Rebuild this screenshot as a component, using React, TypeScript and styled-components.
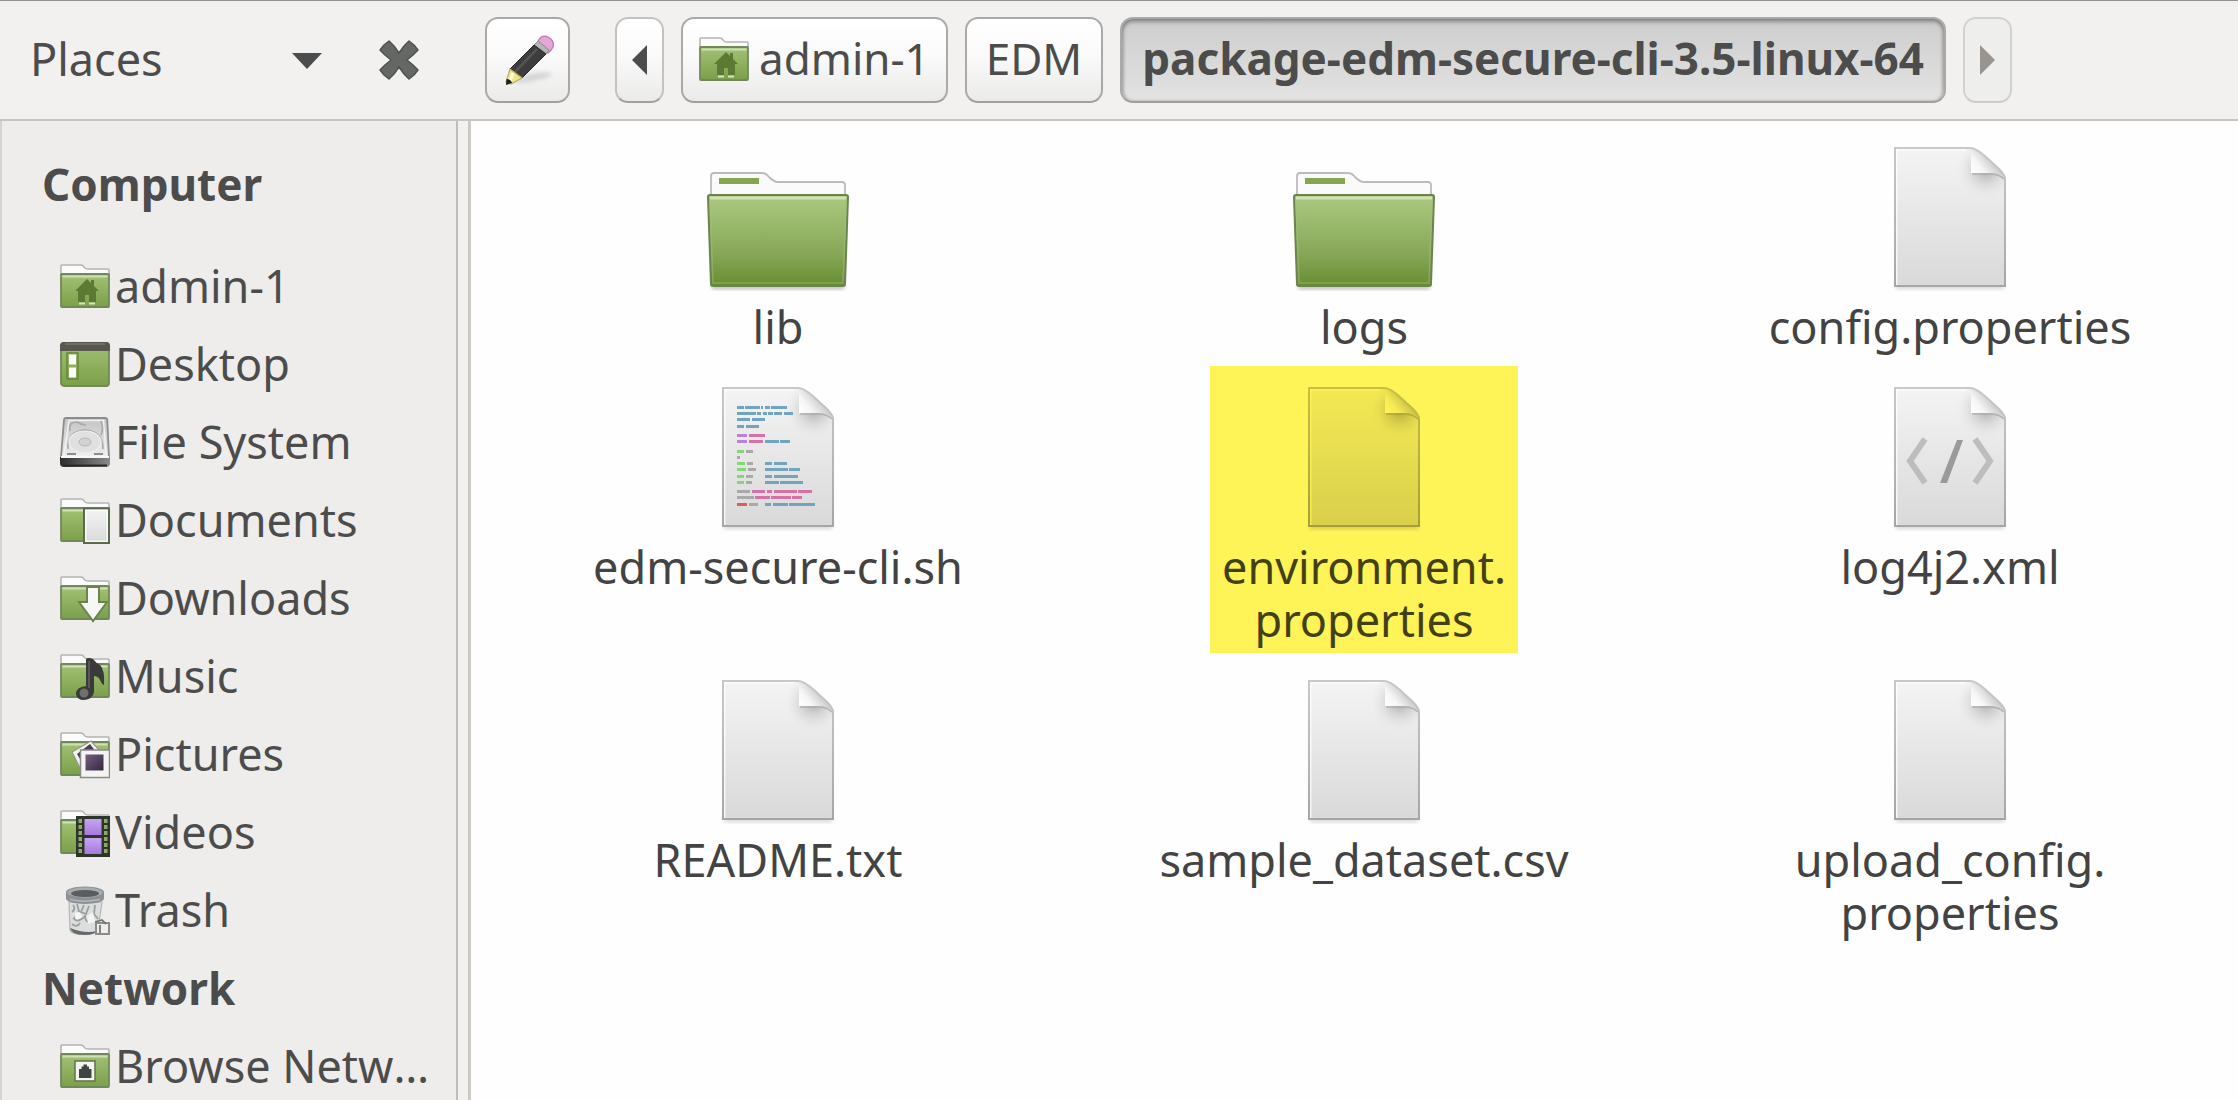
import React from 'react';
import styled, { createGlobalStyle } from 'styled-components';

const GlobalStyle = createGlobalStyle`
  *, *::before, *::after { box-sizing: border-box; }
  body { margin: 0; background: #f2f1f0; }
  body, button, select {
    font-family: 'Noto Sans', 'Open Sans', sans-serif;
    font-size: 44px;
    line-height: 53px;
    color: #4c4c4c;
  }
`;

/* ---------- layout ---------- */

const Window = styled.div`
  display: grid;
  grid-template-rows: auto minmax(0, 1fr);
  height: 100vh;
  overflow: hidden;
`;

const Header = styled.header`
  display: flex;
  align-items: center;
  height: 121px;
  border-top: 1px solid #959492;
  border-bottom: 2px solid #c6c4c1;
  background: #f2f1f0;
`;

const PaneHeader = styled.div`
  display: flex;
  align-items: center;
  flex: 0 0 468px;
  padding-left: 30px;
`;

const PanePicker = styled.label`
  display: grid;
  grid-template-columns: 1fr auto;
  align-items: center;
  width: 293px;
`;

const PaneSelect = styled.select`
  grid-area: 1 / 1 / 2 / 3;
  appearance: none;
  margin: 0;
  padding: 0 0 4px;
  border: 0;
  background: transparent;
  outline: none;
  font-size: 45px;
`;

const PaneArrow = styled.svg`
  grid-area: 1 / 2;
  pointer-events: none;
`;

const CloseButton = styled.button`
  display: flex;
  margin: 0 0 0 56px;
  padding: 0;
  border: 0;
  background: none;
`;

const Toolbar = styled.div`
  display: flex;
  gap: 45px;
  padding-left: 17px;
`;

const PathBar = styled.nav`
  display: flex;
  gap: 17px;
`;

const ToolButton = styled.button<{ $kind?: 'normal' | 'soft' | 'disabled' | 'active'; $pad?: number }>`
  display: flex;
  align-items: center;
  justify-content: center;
  gap: 10px;
  height: 86px;
  margin: 0;
  padding: 0 ${({ $pad = 16 }) => $pad}px 3px;
  white-space: nowrap;
  border-radius: 13px;
  border: 2px solid ${({ $kind }) =>
    $kind === 'disabled' ? '#d2d1cf' : $kind === 'soft' ? '#c3c2c0' : '#aaa9a8'};
  border-bottom-color: ${({ $kind }) => ($kind === 'disabled' ? '#cccbc9' : '#a09f9e')};
  background: ${({ $kind }) =>
    $kind === 'active'
      ? 'linear-gradient(#cdcdcd, #e3e3e3)'
      : $kind === 'disabled'
        ? '#eeeeed'
        : 'linear-gradient(#ffffff, #fafafa 45%, #ebeae9)'};
  box-shadow: ${({ $kind }) =>
    $kind === 'active'
      ? 'inset 0 3px 4px rgba(0,0,0,.32), inset 2px 0 3px rgba(0,0,0,.12), inset -2px 0 3px rgba(0,0,0,.12)'
      : 'none'};
  font-weight: ${({ $kind }) => ($kind === 'active' ? 700 : 400)};
`;

const SquareButton = styled(ToolButton)`
  width: 85px;
  padding: 0;
`;

const ArrowButton = styled(ToolButton)`
  width: 49px;
  padding: 0;
`;

const Body = styled.div`
  display: grid;
  grid-template-columns: 458px minmax(0, 1fr);
  gap: 10px;
  min-height: 0;
`;

const Sidebar = styled.aside`
  padding-top: 24px;
  border-left: 2px solid #d5d3d0;
  border-right: 2px solid #bfbdba;
  background: #eeedeb;
  overflow: auto;
  scrollbar-width: none;
`;

const SectionTitle = styled.h2<{ $spaced?: boolean }>`
  margin: 0 0 ${({ $spaced }) => ($spaced ? 24 : 0)}px;
  padding-left: 40px;
  font-size: 44px;
  line-height: 78px;
  font-weight: 700;
`;

const PlaceList = styled.ul`
  margin: 0;
  padding: 0;
  list-style: none;
`;

const PlaceLink = styled.a`
  display: flex;
  align-items: center;
  gap: 5px;
  height: 78px;
  padding: 0 16px 0 58px;
  color: inherit;
  text-decoration: none;

  svg { flex: none; }
`;

const PlaceName = styled.span`
  overflow: hidden;
  text-overflow: ellipsis;
  white-space: nowrap;
  font-size: 45px;
  line-height: 78px;
`;

const FileView = styled.main`
  border-left: 3px solid #cbc9c6;
  background: #fefefe;
  overflow: hidden;
`;

const FileGrid = styled.ul`
  display: grid;
  grid-template-columns: repeat(3, minmax(0, 1fr));
  column-gap: 46px;
  row-gap: 34px;
  margin: 0;
  padding: 26px 18px 0 37px;
  list-style: none;
`;

const FileItem = styled.li`
  position: relative;
  display: flex;
  flex-direction: column;
  align-items: center;
  gap: 13px;
`;

const IconBox = styled.div`
  display: flex;
  align-items: flex-end;
  height: 140px;

  svg { overflow: visible; }
`;

const FileName = styled.span`
  max-width: 440px;
  text-align: center;
  font-size: 45px;
  color: #434343;
`;

const Marker = styled.span`
  position: absolute;
  top: -21px;
  bottom: -7px;
  left: 50%;
  width: 308px;
  transform: translateX(-50%);
  background: #fff457;
  mix-blend-mode: multiply;
`;

/* ---------- small icons ---------- */

const SharedDefs = () => (
  <svg width="0" height="0" style={{ position: 'absolute' }} aria-hidden="true">
    <defs>
      <linearGradient id="green" x1="0" y1="0" x2="0" y2="1">
        <stop offset="0" stopColor="#a3c275" />
        <stop offset="1" stopColor="#7b9f49" />
      </linearGradient>
      <linearGradient id="bigGreen" x1="0" y1="0" x2="0" y2="1">
        <stop offset="0" stopColor="#abca80" />
        <stop offset=".65" stopColor="#87a757" />
        <stop offset="1" stopColor="#678d33" />
      </linearGradient>
      <linearGradient id="sheet" x1="0" y1="0" x2="0" y2="1">
        <stop offset="0" stopColor="#f4f4f4" />
        <stop offset="1" stopColor="#d9d9d9" />
      </linearGradient>
      <linearGradient id="edge" x1="0" y1="0" x2="0" y2="1">
        <stop offset="0" stopColor="#c8c8c8" />
        <stop offset="1" stopColor="#a6a6a6" />
      </linearGradient>
      <linearGradient id="fold" x1="78" y1="26" x2="98" y2="10" gradientUnits="userSpaceOnUse">
        <stop offset="0" stopColor="#ffffff" />
        <stop offset=".4" stopColor="#f6f6f6" />
        <stop offset="1" stopColor="#c4c4c4" />
      </linearGradient>
      <radialGradient id="foldShade" cx="92" cy="22" r="30" gradientUnits="userSpaceOnUse">
        <stop offset="0" stopColor="#8f8f8f" stopOpacity=".75" />
        <stop offset=".5" stopColor="#b5b5b5" stopOpacity=".35" />
        <stop offset="1" stopColor="#e5e5e5" stopOpacity="0" />
      </radialGradient>
      <linearGradient id="disk" x1="0" y1="0" x2="0" y2="1">
        <stop offset="0" stopColor="#c4c4c4" />
        <stop offset="1" stopColor="#ececec" />
      </linearGradient>
      <linearGradient id="diskBase" x1="0" y1="0" x2="1" y2="0">
        <stop offset="0" stopColor="#2c2c2c" />
        <stop offset="1" stopColor="#8a8a8a" />
      </linearGradient>
      <linearGradient id="purple" x1="0" y1="0" x2="0" y2="1">
        <stop offset="0" stopColor="#c6a4f2" />
        <stop offset="1" stopColor="#a878dc" />
      </linearGradient>
      <linearGradient id="photo" x1="0" y1="0" x2="1" y2="1">
        <stop offset="0" stopColor="#75607f" />
        <stop offset="1" stopColor="#35263f" />
      </linearGradient>
      <filter id="soft" x="-30%" y="-30%" width="160%" height="160%">
        <feGaussianBlur stdDeviation="2" />
      </filter>
    </defs>
  </svg>
);

const SmallIcon = ({ children }: { children: React.ReactNode }) => (
  <svg width="50" height="50" viewBox="0 0 50 50" aria-hidden="true">
    {children}
  </svg>
);

const FolderBase = () => (
  <>
    <path d="M1 14V5Q1 4 2 4H21Q23 4 24 6T28 8H48Q49 8 49 9V14Z" fill="#fbfbfb" stroke="#b4b4b2" strokeWidth="1.6" />
    <rect x="1" y="13" width="48" height="33" rx="1" fill="url(#green)" stroke="#71895a" strokeWidth="1.8" />
    <path d="M2.500 15.500H47.500" stroke="#cfe0b4" strokeWidth="2" />
  </>
);

const HomeIcon = () => (
  <SmallIcon>
    <FolderBase />
    <path d="M27 18L31 22V19H34V25L39 30H36V41H29V34H25V41H18V30H15Z" fill="#5d7a33" />
    <path d="M19 42.500H25M29 42.500H35" stroke="#d5e4bf" strokeWidth="2" />
  </SmallIcon>
);

const DesktopIcon = () => (
  <SmallIcon>
    <rect x="1" y="4" width="48" height="43" rx="3" fill="url(#green)" stroke="#71895a" strokeWidth="1.8" />
    <path d="M0 12V7Q0 3 4 3H46Q50 3 50 7V12Z" fill="#57574f" />
    <path d="M5 5H45" stroke="#77776e" strokeWidth="1.500" />
    <rect x="7" y="14" width="11" height="26" fill="none" stroke="#66873c" strokeWidth="1.500" />
    <rect x="9" y="15.500" width="7" height="10" fill="#fafafa" />
    <rect x="9" y="28.500" width="7" height="10" fill="#fafafa" />
  </SmallIcon>
);

const DiskIcon = () => (
  <SmallIcon>
    <path d="M6 1H45Q47 1 47.300 3L49 40H1L4 3Q4 1 6 1Z" fill="url(#disk)" stroke="#8c8c8c" strokeWidth="1.8" />
    <path d="M9 3.500H43.500L46 38H4Z" fill="none" stroke="#f1f1f1" strokeWidth="1.500" />
    <path d="M10 14Q8 5 17 5Q21 8 26 8M41 4Q44 12 41 18M8 32Q7 14 25 13Q43 14 43 32" fill="none" stroke="#aaaaaa" strokeWidth="1.600" />
    <ellipse cx="25" cy="25" rx="16" ry="11" fill="#e0e0e0" stroke="#f0f0f0" strokeWidth="1.200" />
    <ellipse cx="25" cy="25" rx="6" ry="4" fill="#d2d2d2" stroke="#b5b5b5" />
    <path d="M7 37H16M34 37H43" stroke="#8d8d8d" strokeWidth="1.800" />
    <path d="M0 40H50V46Q50 50 46 50H4Q0 50 0 46Z" fill="url(#diskBase)" />
    <path d="M3 48.500H47" stroke="#2b2b2b" strokeWidth="2" />
    <path d="M1 40H49" stroke="#f8f8f8" strokeWidth="2" />
  </SmallIcon>
);

const DocumentsIcon = () => (
  <SmallIcon>
    <FolderBase />
    <rect x="24" y="13.500" width="25" height="34.500" fill="url(#sheet)" stroke="#5b6a4a" strokeWidth="2" />
    <rect x="25.800" y="15.300" width="21.400" height="31" fill="none" stroke="#ffffff" strokeWidth="1.200" />
  </SmallIcon>
);

const DownloadsIcon = () => (
  <SmallIcon>
    <FolderBase />
    <path d="M27 14H39V29H47L33 48L19 29H27Z" fill="#f7f7f7" stroke="#6b8350" strokeWidth="2" />
  </SmallIcon>
);

const MusicIcon = () => (
  <SmallIcon>
    <FolderBase />
    <path d="M26 8Q28 6 33 8Q36 12 40 14Q45 19 44 34Q42 34 41 31Q39 25 34 25V41Q33 48 24 49Q17 49 16 43Q16 36 26 35Z" fill="#3a3a3a" />
    <path d="M29 10V37" stroke="#636363" strokeWidth="1.500" />
    <circle cx="24" cy="42" r="4.500" fill="#707070" />
  </SmallIcon>
);

const PicturesIcon = () => (
  <SmallIcon>
    <FolderBase />
    <path d="M12 23L31 12L41 23L23 45Z" fill="#f2f2f2" stroke="#8e9b80" strokeWidth="1.200" />
    <path d="M17 25L30 15L36 23L23 35Z" fill="#4d3b57" />
    <rect x="20.500" y="21" width="29" height="27.500" fill="#f3f3f3" stroke="#8a8a88" strokeWidth="1.500" />
    <rect x="25.500" y="25.500" width="18" height="16" fill="url(#photo)" />
  </SmallIcon>
);

const VideosIcon = () => (
  <SmallIcon>
    <FolderBase />
    <rect x="16" y="9" width="34" height="41" fill="#2d352a" />
    <rect x="24.500" y="12" width="17" height="16" fill="url(#purple)" />
    <rect x="24.500" y="31" width="17" height="16" fill="url(#purple)" />
    {[12, 18, 24, 30, 36, 42].map((y) => (
      <g key={y} fill="#8ca968">
        <rect x="18.500" y={y} width="3.500" height="4" />
        <rect x="44" y={y} width="3.500" height="4" />
      </g>
    ))}
  </SmallIcon>
);

const TrashIcon = () => (
  <SmallIcon>
    <path d="M9 17H42L38 45Q36 49 24 50Q11 49 10 45Z" fill="#dcdedd" stroke="#b4b7b7" strokeWidth="1.200" />
    <path d="M13 20Q16 24 12 27M17 19L19 26L14 34M24 20L21 27L26 29L29 21M35 20L34 29L38 34M13 33Q18 39 25 31Q26 41 33 33M12 39Q17 43 20 38" fill="none" stroke="#9a9e9d" strokeWidth="1.800" />
    <path d="M15 28Q20 25 22 32Q18 36 15 33ZM27 31L33 27L35 37L28 39Z" fill="#f4f4f4" />
    <path d="M10 43Q12 50 24 50Q34 50 37 46Q25 49 10 43Z" fill="#65696b" />
    <rect x="36" y="38" width="13" height="11" fill="#ededec" stroke="#8b8c8a" strokeWidth="2" />
    <path d="M35 37L42 35L46 39M40 40V48" stroke="#777" strokeWidth="1.800" fill="none" />
    <path d="M6 7Q7 2 25 1.500Q43 2 44 7V14Q42 18.500 25 19Q8 18.500 6 14Z" fill="#8d9194" />
    <ellipse cx="25" cy="7.500" rx="17.500" ry="5" fill="#a9acae" />
    <ellipse cx="25" cy="8.500" rx="14" ry="3.500" fill="#5a5d60" />
    <path d="M10 14.500Q24 18 40 14.500" stroke="#b4b7b9" strokeWidth="1.500" fill="none" />
  </SmallIcon>
);

const NetworkIcon = () => (
  <SmallIcon>
    <FolderBase />
    <rect x="15" y="20" width="20" height="20" fill="#f4f4f2" stroke="#66784f" strokeWidth="1.600" />
    <path d="M19 37V28H21.500V25.500H23.500V23.500H27V25.500H29V28H31.500V37Z" fill="#3f4540" />
  </SmallIcon>
);

const PencilIcon = () => (
  <svg width="54" height="54" viewBox="0 0 54 54" aria-hidden="true">
    <path d="M18 45Q34 38 50 40Q52 44 40 46Q26 50 14 50Z" fill="#cdcdcd" opacity=".8" filter="url(#soft)" />
    <path d="M37 8Q41 1 47 4Q54 8 52 14Q50 18 47 20L35 13Z" fill="#e4a5d8" stroke="#b47aa8" strokeWidth="1.200" />
    <path d="M33 12L37 8L48 17L45 21Z" fill="#b5b5b5" stroke="#8d8d8d" />
    <path d="M33 12L45 21L21 45L9 36Z" fill="#3d3d3d" stroke="#2a2a2a" />
    <path d="M36 16L14 39" stroke="#565656" strokeWidth="2.500" />
    <path d="M9 36L21 45L10 51L5 49Z" fill="#eee692" stroke="#b8ae5a" strokeWidth="1.200" />
    <path d="M12 40L9 48" stroke="#fffde0" strokeWidth="3" />
    <path d="M5.500 46Q10 46 11 50L5 52Z" fill="#1f1f1f" />
  </svg>
);

const CloseIcon = () => (
  <svg width="40" height="40" viewBox="0 0 40 40" aria-hidden="true">
    <path
      d="M10 1L15 6L20 13L25 6L30 1L35 5L39 10L34 15L28 20L34 25L39 30L35 35L30 39L25 34L20 27L15 34L10 39L5 35L1 30L6 25L12 20L6 15L1 10L5 5Z"
      fill="#656765"
      stroke="#505250"
      strokeWidth="1.500"
      strokeLinejoin="round"
    />
  </svg>
);

const Triangle = ({ flip, color }: { flip?: boolean; color: string }) => (
  <svg width="16" height="32" viewBox="0 0 16 32" aria-hidden="true">
    <path d={flip ? 'M1 1L16 16L1 31Z' : 'M15 1L0 16L15 31Z'} fill={color} />
  </svg>
);

/* ---------- large icons ---------- */

const FolderIcon = () => (
  <svg width="142" height="115" viewBox="0 0 142 115" aria-hidden="true">
    <path d="M5 113H137V117H5Z" fill="#000" opacity=".3" filter="url(#soft)" />
    <path d="M4 26V4Q4 1 7 1H55Q59 1 62 5Q67 10 71 10H135Q138 10 138 13V26Z" fill="#fafafa" stroke="#bdbabd" strokeWidth="1.800" />
    <rect x="12" y="6" width="40" height="6" fill="#84a64f" />
    <path d="M1 25Q1 23 3 23H139Q141 23 141 25L138 112Q138 114 136 114H6Q4 114 4 112Z" fill="url(#bigGreen)" stroke="#6c8350" strokeWidth="2" />
    <path d="M3 26H139" stroke="#cfe2b3" strokeWidth="3" />
    <path d="M3 29L6 111H136L139 29" fill="none" stroke="#a5c47a" strokeWidth="1.500" opacity=".45" />
  </svg>
);

const SheetIcon = ({ children }: { children?: React.ReactNode }) => (
  <svg width="112" height="140" viewBox="0 0 112 140" aria-hidden="true">
    <path d="M2 137H110V142H2Z" fill="#000" opacity=".16" filter="url(#soft)" />
    <path d="M1 1H76Q82 1 92 10L105 22Q111 28 111 32V139H1Z" fill="url(#sheet)" />
    <path d="M60 1H76Q82 1 92 10L105 22Q111 28 111 32V56H60Z" fill="url(#foldShade)" />
    <path d="M77 2Q84 4 92 11L105 23Q109 27 110 31Q106 26 96 26H77Z" fill="url(#fold)" />
    <path d="M78 27H96Q105 27 110 32" fill="none" stroke="#a9a9a9" strokeWidth="1.600" opacity=".8" />
    <path d="M2.700 138V2.700H72" fill="none" stroke="#fff" strokeWidth="1.400" opacity=".8" />
    <path d="M1 1H76Q82 1 92 10L105 22Q111 28 111 32V139H1Z" fill="none" stroke="url(#edge)" strokeWidth="2" />
    {children}
  </svg>
);

const BLUE = '#72a3bf';
const PINK = '#d671a8';
const PURPLE = '#b583d8';
const GREEN = '#84d873';
const GRAY = '#a9a9a9';
const RED = '#e65a55';

const CODE_LINES: [number, number, number, string][] = [
  [15, 22, 20, BLUE], [23, 38, 20, BLUE], [39, 41, 20, BLUE], [43, 48, 20, BLUE], [49, 65, 20, BLUE],
  [15, 34, 26, BLUE], [35, 39, 26, BLUE], [41, 45, 26, BLUE], [46, 51, 26, BLUE], [52, 60, 26, BLUE], [62, 71, 26, BLUE],
  [15, 28, 32, BLUE], [30, 43, 32, BLUE],
  [15, 22, 39, BLUE], [24, 37, 39, BLUE],
  [15, 25, 48, PURPLE], [27, 43, 48, PINK],
  [15, 25, 54, PURPLE], [27, 41, 54, PINK], [43, 57, 54, BLUE], [58, 68, 54, BLUE],
  [15, 22, 64, GREEN], [24, 31, 64, GRAY],
  [15, 18, 70, GRAY],
  [15, 23, 76, GREEN], [25, 31, 76, GRAY], [43, 50, 76, BLUE], [52, 65, 76, BLUE],
  [15, 24, 82, GREEN], [26, 34, 82, GRAY], [43, 66, 82, BLUE], [67, 78, 82, BLUE],
  [15, 22, 89, GREEN], [24, 31, 89, GRAY], [43, 50, 89, BLUE], [52, 76, 89, BLUE],
  [15, 22, 95, GREEN], [24, 30, 95, GRAY], [43, 57, 95, BLUE], [58, 81, 95, BLUE],
  [15, 28, 104, GRAY], [30, 43, 104, PINK], [45, 50, 104, PINK], [52, 75, 104, PINK], [76, 90, 104, PINK],
  [15, 32, 110, GRAY], [33, 48, 110, PINK], [49, 69, 110, PINK], [70, 80, 110, PINK],
  [15, 25, 117, RED], [27, 36, 117, GRAY], [43, 49, 117, BLUE], [51, 66, 117, BLUE], [67, 93, 117, BLUE],
];

const ScriptIcon = () => (
  <SheetIcon>
    {CODE_LINES.map(([x1, x2, y, color], i) => (
      <rect key={i} x={x1} y={y - 1} width={x2 - x1} height="3" fill={color} />
    ))}
  </SheetIcon>
);

const MarkupIcon = () => (
  <SheetIcon>
    <path d="M31 52L16 74L31 96" fill="none" stroke="#bdbdbd" strokeWidth="6" />
    <path d="M81 52L96 74L81 96" fill="none" stroke="#bdbdbd" strokeWidth="6" />
    <path d="M63 53H69L53 96H46Z" fill="#9a9a9a" />
  </SheetIcon>
);

/* ---------- data ---------- */

const COMPUTER_PLACES = [
  { name: 'admin-1', Icon: HomeIcon },
  { name: 'Desktop', Icon: DesktopIcon },
  { name: 'File System', Icon: DiskIcon },
  { name: 'Documents', Icon: DocumentsIcon },
  { name: 'Downloads', Icon: DownloadsIcon },
  { name: 'Music', Icon: MusicIcon },
  { name: 'Pictures', Icon: PicturesIcon },
  { name: 'Videos', Icon: VideosIcon },
  { name: 'Trash', Icon: TrashIcon },
];

const NETWORK_PLACES = [{ name: 'Browse Network', Icon: NetworkIcon }];

const FILES = [
  { name: ['lib'], Icon: FolderIcon },
  { name: ['logs'], Icon: FolderIcon },
  { name: ['config.properties'], Icon: SheetIcon },
  { name: ['edm-secure-cli.sh'], Icon: ScriptIcon },
  { name: ['environment.', 'properties'], Icon: SheetIcon, marked: true },
  { name: ['log4j2.xml'], Icon: MarkupIcon },
  { name: ['README.txt'], Icon: SheetIcon },
  { name: ['sample_dataset.csv'], Icon: SheetIcon },
  { name: ['upload_config.', 'properties'], Icon: SheetIcon },
];

const Places = ({ items }: { items: typeof COMPUTER_PLACES }) => (
  <PlaceList>
    {items.map(({ name, Icon }) => (
      <li key={name}>
        <PlaceLink href="#">
          <Icon />
          <PlaceName>{name}</PlaceName>
        </PlaceLink>
      </li>
    ))}
  </PlaceList>
);

export default function App() {
  return (
    <Window>
      <GlobalStyle />
      <Header>
        <SharedDefs />
        <PaneHeader>
          <PanePicker>
            <PaneSelect aria-label="Side pane" defaultValue="Places">
              <option>Places</option>
            </PaneSelect>
            <PaneArrow width="32" height="18" viewBox="0 0 32 18" aria-hidden="true">
              <path d="M1 2H31L16 18Z" fill="#4c4c4c" />
            </PaneArrow>
          </PanePicker>
          <CloseButton aria-label="Close side pane">
            <CloseIcon />
          </CloseButton>
        </PaneHeader>
        <Toolbar>
          <SquareButton aria-label="Edit location">
            <PencilIcon />
          </SquareButton>
          <PathBar aria-label="Path">
            <ArrowButton $kind="soft" aria-label="Scroll path left">
              <Triangle color="#4c4c4c" />
            </ArrowButton>
            <ToolButton>
              <HomeIcon />
              admin-1
            </ToolButton>
            <ToolButton $pad={19}>EDM</ToolButton>
            <ToolButton $kind="active" $pad={20}>
              package-edm-secure-cli-3.5-linux-64
            </ToolButton>
            <ArrowButton $kind="disabled" aria-label="Scroll path right">
              <Triangle flip color="#98948f" />
            </ArrowButton>
          </PathBar>
        </Toolbar>
      </Header>
      <Body>
        <Sidebar>
          <SectionTitle $spaced>Computer</SectionTitle>
          <Places items={COMPUTER_PLACES} />
          <SectionTitle>Network</SectionTitle>
          <Places items={NETWORK_PLACES} />
        </Sidebar>
        <FileView>
          <FileGrid>
            {FILES.map(({ name, Icon, marked }) => (
              <FileItem key={name.join('')}>
                <IconBox>
                  <Icon />
                </IconBox>
                <FileName>
                  {name.map((part, i) => (
                    <React.Fragment key={part}>
                      {i > 0 && <wbr />}
                      {part}
                    </React.Fragment>
                  ))}
                </FileName>
                {marked && <Marker />}
              </FileItem>
            ))}
          </FileGrid>
        </FileView>
      </Body>
    </Window>
  );
}
